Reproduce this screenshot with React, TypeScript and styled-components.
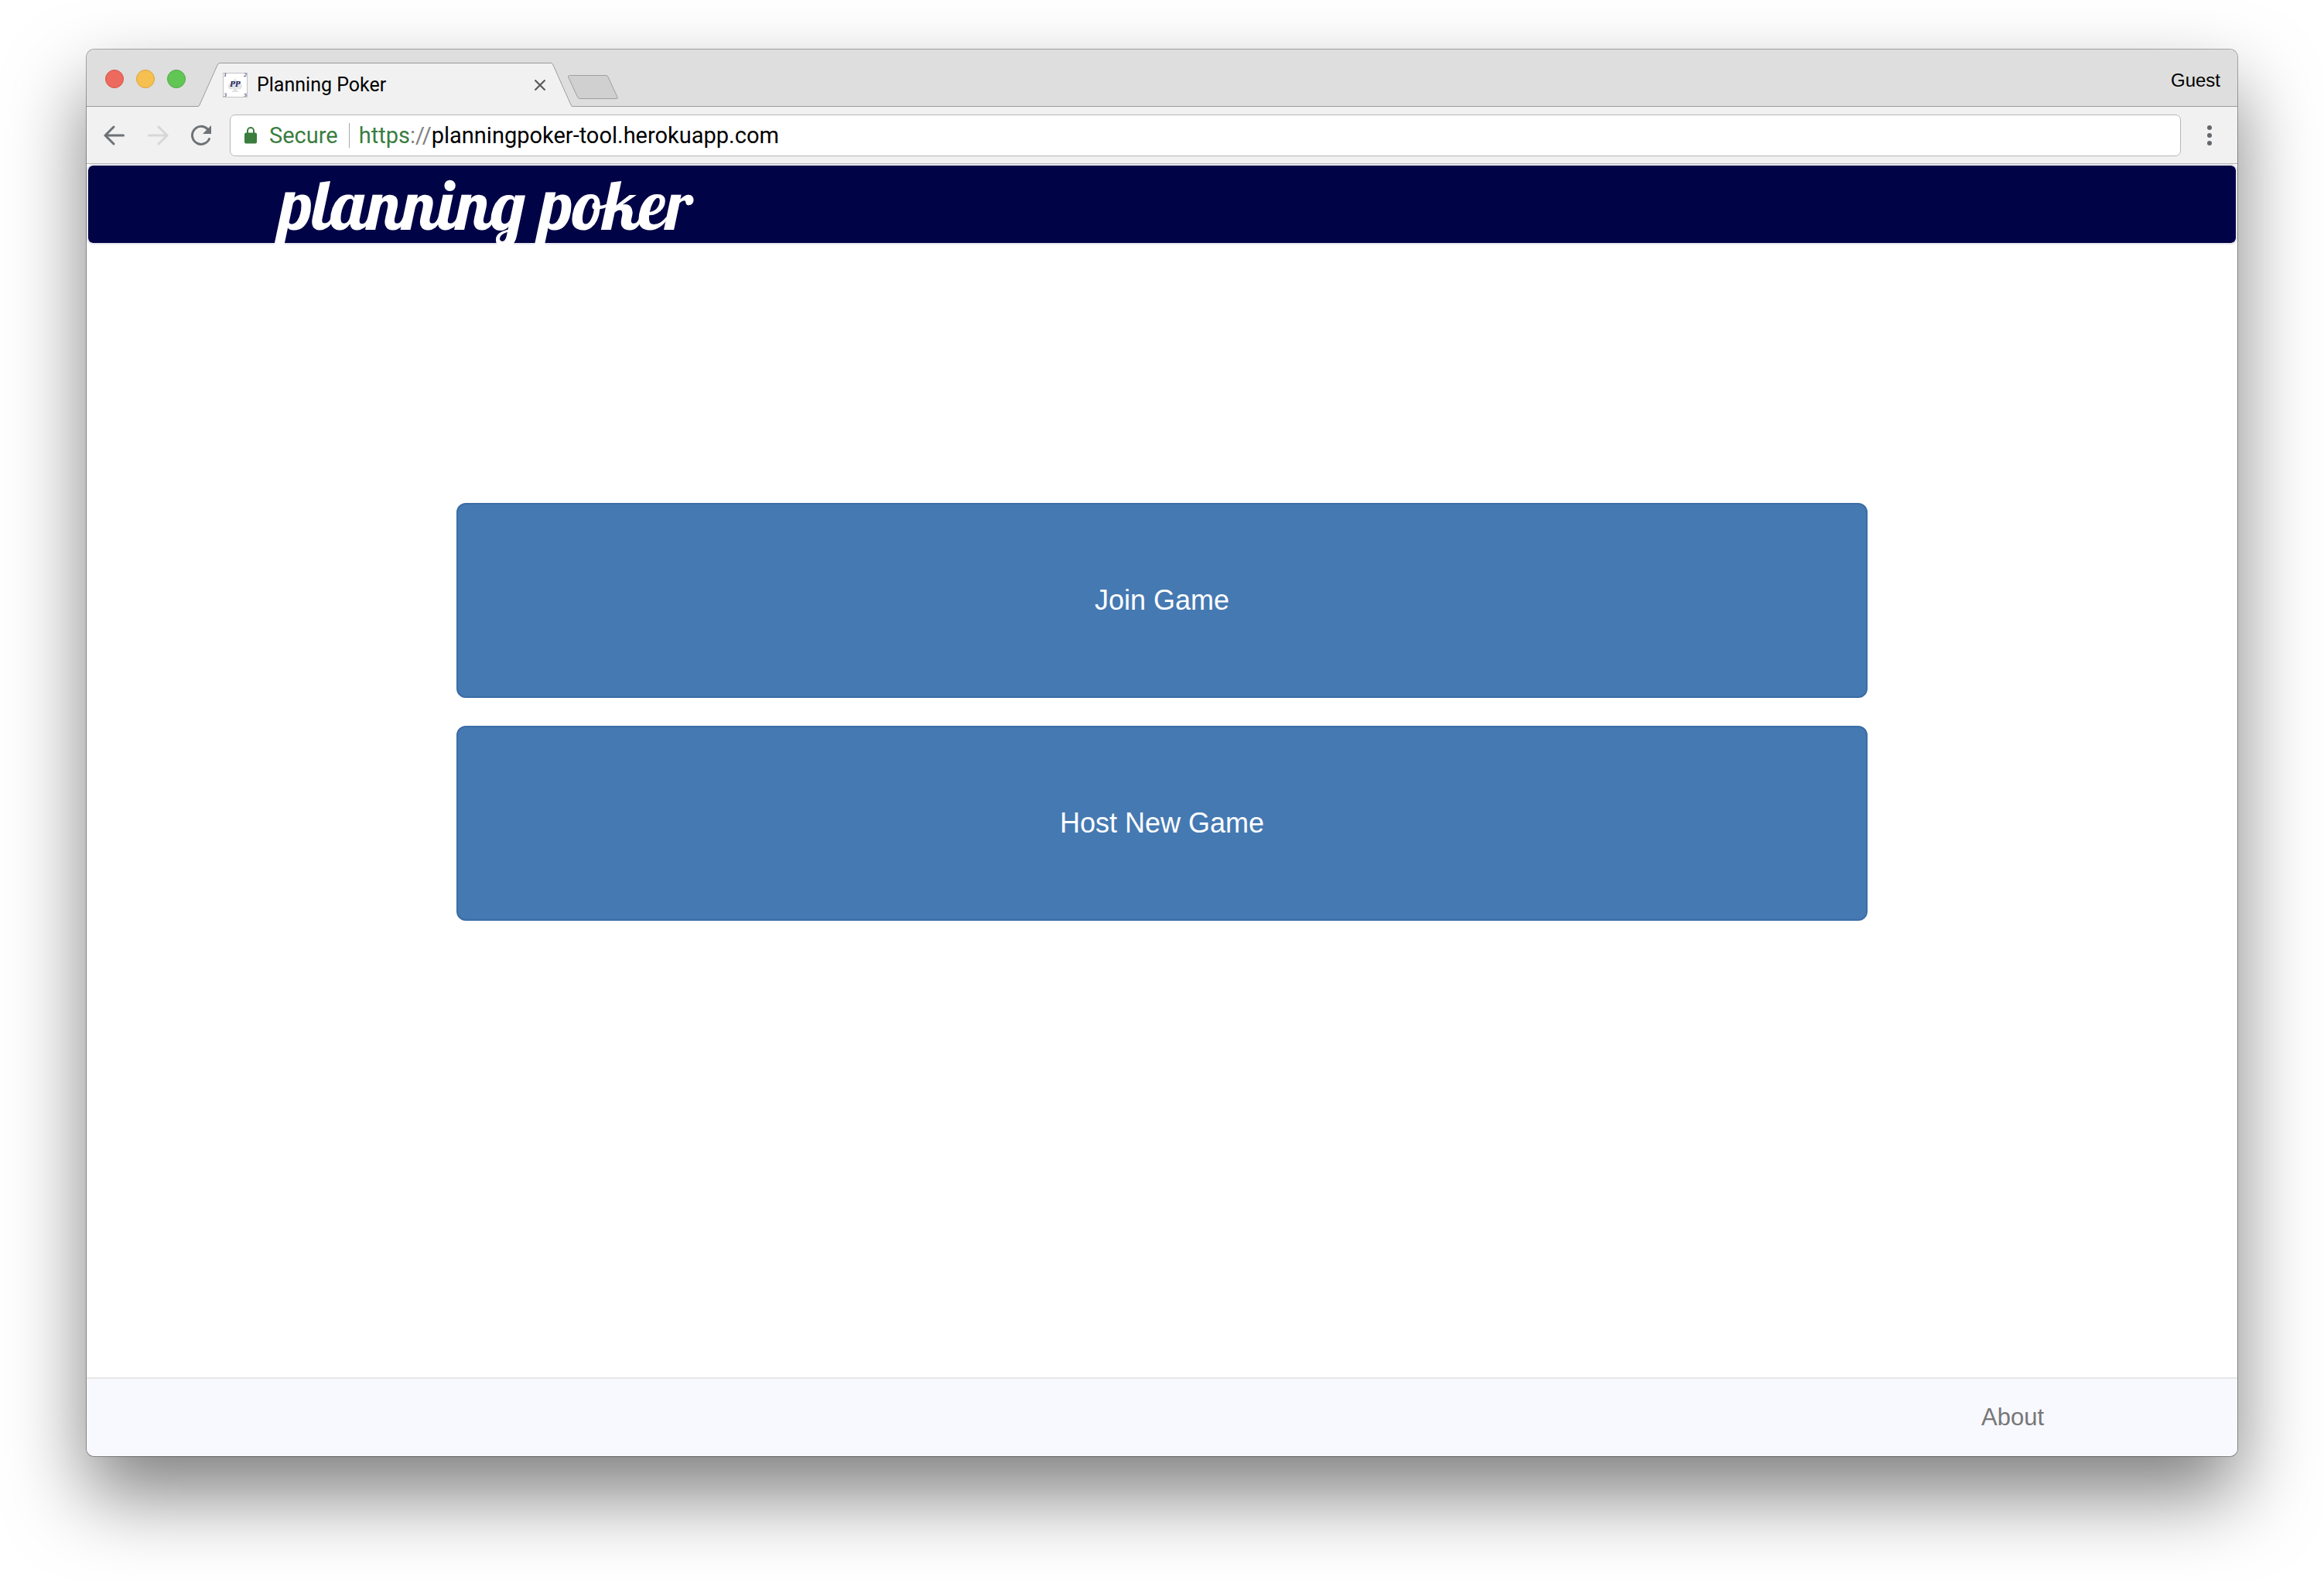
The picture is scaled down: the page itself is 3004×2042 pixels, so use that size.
import React from "react";
import styled, { createGlobalStyle } from "styled-components";

const sans = `"Liberation Sans", Arial, sans-serif`;
const system = `Roboto, "Liberation Sans", sans-serif`;

const GlobalStyle = createGlobalStyle`
  *, *::before, *::after { box-sizing: border-box; }
  body { margin: 0; background: #fff; font-family: ${sans}; }
  button, input { font: inherit; color: inherit; margin: 0; }
`;

const Desktop = styled.div`
  display: flex;
  min-height: 100vh;
  padding: 64px 112px 160px;
`;

const BrowserWindow = styled.div`
  display: flex;
  flex: 1;
  flex-direction: column;
  min-width: 0;
  overflow: hidden;
  border-radius: 10px;
  background: #fff;
  box-shadow: 0 0 0 1px rgba(0, 0, 0, 0.32), 0 50px 100px rgba(0, 0, 0, 0.5);
`;

const TabStrip = styled.div`
  display: flex;
  height: 74px;
  border-bottom: 1px solid #9b9b9b;
  background: #dedede;
`;

const WindowControls = styled.div`
  display: flex;
  align-items: center;
  gap: 16px;
  padding: 2px 16px 0 24px;
`;

const Light = styled.button<{ $fill: string; $edge: string }>`
  width: 24px;
  height: 24px;
  padding: 0;
  border: 1px solid ${(p) => p.$edge};
  border-radius: 50%;
  background: ${(p) => p.$fill};
`;

const Tab = styled.div`
  display: flex;
  flex: none;
  align-self: flex-end;
  height: 57px;
  margin-bottom: -1px;
`;

const TabEdge = styled.svg`
  display: block;
  width: 28px;
  height: 57px;
`;

const TabBody = styled.div`
  display: flex;
  align-items: center;
  width: 428px;
  padding: 0 6px 0 4px;
  border-top: 1px solid #9b9b9b;
  background: #f1f1f1;
`;

const TabTitle = styled.span`
  flex: 1;
  margin-left: 12px;
  color: #000;
  font: 25px/32px ${system};
  white-space: nowrap;
`;

const IconButton = styled.button`
  display: flex;
  align-items: center;
  justify-content: center;
  padding: 0;
  border: 0;
  background: none;
`;

const NewTab = styled(IconButton)`
  align-self: flex-end;
  margin: 0 0 8px -7px;
`;

const Profile = styled.button`
  margin-left: auto;
  padding: 6px 22px 0 0;
  border: 0;
  background: none;
  color: #000;
  font: 24px/32px ${sans};
`;

const Toolbar = styled.div`
  display: flex;
  align-items: center;
  height: 74px;
  padding: 0 20px;
  border-bottom: 1px solid #b4b4b4;
  background: #f1f1f1;
`;

const NavButtons = styled.div`
  display: flex;
  gap: 24px;
  margin-right: 21px;
`;

const AddressBar = styled.form`
  display: flex;
  flex: 1;
  align-items: center;
  height: 54px;
  margin-right: 21px;
  padding: 0 18px;
  border: 1px solid #b6b6b6;
  border-radius: 7px;
  background: #fff;
  font: 29px/36px ${system};
`;

const Secure = styled.span`
  margin: 0 14px 0 16px;
  color: #3a7d3f;
`;

const Divider = styled.span`
  width: 1px;
  height: 32px;
  margin-right: 12px;
  background: #a9a9a9;
`;

const Scheme = styled.label`
  color: #3a7d3f;
`;

const Slashes = styled.span`
  color: #808080;
`;

const AddressInput = styled.input`
  flex: 1;
  min-width: 0;
  padding: 0;
  border: 0;
  outline: 0;
  background: none;
  color: #000;
`;

const Navbar = styled.header`
  height: 104px;
  border: 2px solid #e7e7ee;
  border-radius: 8px;
  background: #000446;
  background-clip: padding-box;
`;

const Container = styled.div`
  width: 100%;
  max-width: 2340px;
  margin: 0 auto;
  padding: 0 30px;
`;

const Brand = styled.a`
  display: inline-block;
  color: #fff;
  font: 90px/100px Lobster, "Liberation Serif", serif;
  text-decoration: none;
  white-space: nowrap;
`;

const Main = styled.main`
  flex: 1;
  padding: 334px 0 40px;
`;

const Actions = styled.div`
  display: flex;
  flex-direction: column;
  gap: 36px;
  width: 80%;
  margin: 0 auto;
`;

const ActionButton = styled.button`
  padding: 100px 32px;
  border: 2px solid #3b6da5;
  border-radius: 12px;
  background: #4579b2;
  color: #fff;
  font: 36px/48px ${sans};
`;

const Footer = styled.footer`
  border-top: 2px solid #e7e7e7;
  background: #f8f8ff;
`;

const FooterNav = styled.nav`
  display: flex;
  justify-content: flex-end;
  padding: 30px 0;
`;

const FooterLink = styled.a`
  color: #777;
  font: 31px/40px ${sans};
  text-decoration: none;
`;

function Favicon() {
  return (
    <svg width="32" height="32" viewBox="0 0 32 32" aria-hidden="true">
      <rect x="0.5" y="0.5" width="31" height="31" fill="#fff" stroke="#c4c4c8" />
      <path
        d="M16 7c2 4 9 6 9 10.500a4 4 0 0 1-7.500 2c.3 2.500 1.500 4 3.500 5.500H11c2-1.500 3.200-3 3.500-5.500a4 4 0 0 1-7.500-2C7 13 14 11 16 7z"
        fill="#e3e3e6"
      />
      <g fill="#25255f" fontFamily="DejaVu Serif, serif" fontWeight="bold" fontStyle="italic">
        <text x="16" y="18" fontSize="9" textAnchor="middle">PP</text>
        <g fontSize="6" opacity="0.75">
          <text x="1" y="5">1</text>
          <text x="27" y="5">2</text>
          <text x="1" y="31">3</text>
          <text x="27" y="31">5</text>
        </g>
      </g>
    </svg>
  );
}

function Arrow({ color, forward }: { color: string; forward?: boolean }) {
  return (
    <svg width="32" height="32" viewBox="0 0 32 32" fill="none" stroke={color} strokeWidth="3" strokeLinecap="round">
      {forward ? <path d="M4.500 16H28M17 5L28 16L17 27" /> : <path d="M27.500 16H4M15 5L4 16L15 27" />}
    </svg>
  );
}

function Reload() {
  return (
    <svg width="32" height="32" viewBox="0 0 32 32">
      <path d="M26.500 20.500A11.500 11.500 0 1 1 24 7.600" fill="none" stroke="#6e7276" strokeWidth="3" strokeLinecap="round" />
      <path d="M29 3V14H18z" fill="#6e7276" />
    </svg>
  );
}

export default function App() {
  return (
    <>
      <GlobalStyle />
      <Desktop>
        <BrowserWindow>
          <TabStrip>
            <WindowControls>
              <Light type="button" aria-label="Close window" $fill="#ed6a5e" $edge="#d65549" />
              <Light type="button" aria-label="Minimize window" $fill="#f5c04f" $edge="#dba53a" />
              <Light type="button" aria-label="Zoom window" $fill="#61c654" $edge="#4eab43" />
            </WindowControls>
            <Tab>
              <TabEdge viewBox="0 0 28 57" aria-hidden="true">
                <path d="M0 57L1.500 55L25 3Q26 0 28 0V57z" fill="#f1f1f1" />
                <path d="M0 56.500Q1 56.500 1.800 55L25 3Q26 0.500 28 0.500" fill="none" stroke="#9b9b9b" />
              </TabEdge>
              <TabBody>
                <Favicon />
                <TabTitle>Planning Poker</TabTitle>
                <IconButton type="button" aria-label="Close tab">
                  <svg width="16" height="16" viewBox="0 0 16 16" stroke="#5a5a5a" strokeWidth="2.200">
                    <path d="M1.500 1.500L14.500 14.500M14.500 1.500L1.500 14.500" />
                  </svg>
                </IconButton>
              </TabBody>
              <TabEdge viewBox="0 0 28 57" aria-hidden="true">
                <path d="M28 57L26.500 55L3 3Q2 0 0 0V57z" fill="#f1f1f1" />
                <path d="M28 56.500Q27 56.500 26.200 55L3 3Q2 0.500 0 0.500" fill="none" stroke="#9b9b9b" />
              </TabEdge>
            </Tab>
            <NewTab type="button" aria-label="New tab">
              <svg width="68" height="33" viewBox="0 0 68 33">
                <path
                  d="M3.500 1.500H50Q52 1.500 53 3.500L65 29.500Q66 31.500 64 31.500H17Q14.500 31.500 13.500 29.500L1.800 4Q0.800 1.500 3.500 1.500z"
                  fill="#d0d0d0"
                  stroke="#9f9f9f"
                />
              </svg>
            </NewTab>
            <Profile type="button">Guest</Profile>
          </TabStrip>
          <Toolbar>
            <NavButtons>
              <IconButton type="button" aria-label="Back">
                <Arrow color="#6e7276" />
              </IconButton>
              <IconButton type="button" aria-label="Forward">
                <Arrow color="#d6d7d8" forward />
              </IconButton>
              <IconButton type="button" aria-label="Reload">
                <Reload />
              </IconButton>
            </NavButtons>
            <AddressBar onSubmit={(e) => e.preventDefault()}>
              <svg width="16" height="22" viewBox="0 0 16 22" aria-hidden="true">
                <rect y="7.500" width="16" height="14" rx="2" fill="#3a7d3f" />
                <path d="M4 8V5a4 4 0 0 1 8 0V8" fill="none" stroke="#3a7d3f" strokeWidth="2" />
              </svg>
              <Secure>Secure</Secure>
              <Divider />
              <Scheme htmlFor="address">
                https<Slashes>://</Slashes>
              </Scheme>
              <AddressInput id="address" type="text" defaultValue="planningpoker-tool.herokuapp.com" />
            </AddressBar>
            <IconButton type="button" aria-label="Menu">
              <svg width="32" height="32" viewBox="0 0 32 32" fill="#63676b">
                <circle cx="16" cy="6" r="3" />
                <circle cx="16" cy="16" r="3" />
                <circle cx="16" cy="26" r="3" />
              </svg>
            </IconButton>
          </Toolbar>
          <Navbar>
            <Container>
              <Brand href="#">planning poker</Brand>
            </Container>
          </Navbar>
          <Main>
            <Container>
              <Actions>
                <ActionButton type="button">Join Game</ActionButton>
                <ActionButton type="button">Host New Game</ActionButton>
              </Actions>
            </Container>
          </Main>
          <Footer>
            <Container>
              <FooterNav>
                <FooterLink href="#">About</FooterLink>
              </FooterNav>
            </Container>
          </Footer>
        </BrowserWindow>
      </Desktop>
    </>
  );
}
